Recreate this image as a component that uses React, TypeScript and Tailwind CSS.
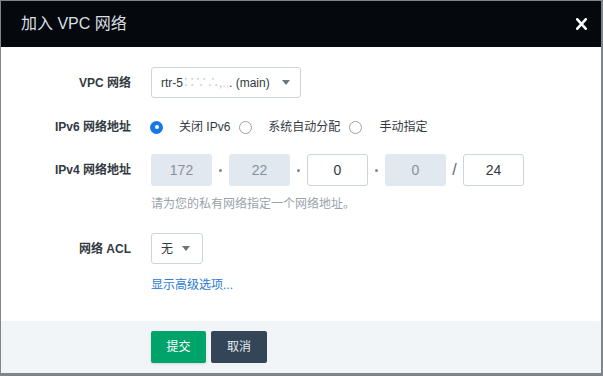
import React from "react";

const Caret = () => (
  <svg width="8" height="5" viewBox="0 0 8 5" className="shrink-0">
    <path d="M0 0 L8 0 L4 5 Z" fill="#6b7580" />
  </svg>
);

const Radio = ({ checked }: { checked?: boolean }) =>
  checked ? (
    <span className="block shrink-0 w-[13px] h-[13px] rounded-full bg-[#1677e6] flex items-center justify-center">
      <span className="block w-[4px] h-[4px] rounded-full bg-white" />
    </span>
  ) : (
    <span className="block shrink-0 w-[13px] h-[13px] rounded-full border border-[#9aa1a8] bg-white" />
  );

const Label = ({ children }: { children: React.ReactNode }) => (
  <div className="w-[130px] shrink-0 text-right text-[12px] font-semibold text-[#333a42]">{children}</div>
);

const IpBox = ({ v, disabled }: { v: string; disabled?: boolean }) => (
  <div
    className={
      disabled
        ? "w-[61px] h-[32px] rounded-[3px] bg-[#e1e8ef] flex items-center justify-center text-[14px] text-[#87929e]"
        : "w-[61px] h-[32px] rounded-[3px] border border-[#cdd4db] bg-white flex items-center justify-center text-[14px] text-[#333a42]"
    }
  >
    {v}
  </div>
);

const Dot = () => (
  <div className="w-[17px] flex items-center justify-center">
    <span className="block w-[3px] h-[3px] rounded-full bg-[#7d8791]" />
  </div>
);

export default function App() {
  return (
    <div
      className="w-[603px] h-[376px] bg-[#7e858d] pt-px pl-px overflow-hidden"
      style={{ fontFamily: '"Liberation Sans", "Noto Sans CJK SC", sans-serif' }}
    >
      <div className="w-[600px] h-[372px] bg-white flex flex-col">
        <div className="h-[46px] bg-[#05090d] flex items-center justify-between pl-[20px] pr-[14px]">
          <span className="text-[16px] text-[#dcdfe2]">加入 VPC 网络</span>
          <svg width="11" height="12" viewBox="0 0 11 12">
            <path d="M1.3 1.3 L9.7 10.7 M9.7 1.3 L1.3 10.7" stroke="#ffffff" strokeWidth="2.6" strokeLinecap="round" />
          </svg>
        </div>
        <div className="h-[274px] pt-[20px] flex flex-col">
          <div className="flex items-center h-[31px]">
            <Label>VPC 网络</Label>
            <div className="ml-[20px] w-[150px] h-[31px] border border-[#cdd4db] rounded-[3px] flex items-center justify-between pl-[9px] pr-[10px]">
              <span className="text-[12px] text-[#333a42] whitespace-nowrap">
                rtr-5<span className="text-[#c5cad0]">∷∵∴</span><span className="text-[#b9bfc5]">,</span>
                <span className="text-[#d5d9dd]">.,</span>. (main)
              </span>
              <Caret />
            </div>
          </div>
          <div className="flex items-center h-[20px] mt-[19px]">
            <Label>IPv6 网络地址</Label>
            <div className="ml-[19px] flex items-center text-[12px] text-[#333a42]">
              <Radio checked />
              <span className="ml-[16px]">关闭 IPv6</span>
              <span className="ml-[9px]"><Radio /></span>
              <span className="ml-[16px]">系统自动分配</span>
              <span className="ml-[9px]"><Radio /></span>
              <span className="ml-[17px]">手动指定</span>
            </div>
          </div>
          <div className="flex items-center h-[32px] mt-[17px]">
            <Label>IPv4 网络地址</Label>
            <div className="ml-[20px] flex items-center">
              <IpBox v="172" disabled />
              <Dot />
              <IpBox v="22" disabled />
              <Dot />
              <IpBox v="0" />
              <Dot />
              <IpBox v="0" disabled />
              <div className="w-[17px] flex items-center justify-center text-[16px] text-[#5d6873]">/</div>
              <IpBox v="24" />
            </div>
          </div>
          <div className="pl-[150px] mt-[9px] h-[18px] flex items-center text-[12px] text-[#9aa2ab]">
            请为您的私有网络指定一个网络地址。
          </div>
          <div className="flex items-center h-[31px] mt-[20px]">
            <Label>网络 ACL</Label>
            <div className="ml-[20px] w-[52px] h-[31px] border border-[#cdd4db] rounded-[3px] flex items-center justify-between pl-[9px] pr-[12px]">
              <span className="text-[12px] text-[#333a42]">无</span>
              <Caret />
            </div>
          </div>
          <div className="pl-[150px] mt-[12px] h-[18px] flex items-center text-[12px] text-[#2b7ad3]">
            显示高级选项...
          </div>
        </div>
        <div className="flex-1 bg-[#f1f5f8] flex items-start pt-[10px] pl-[150px] gap-[5px]">
          <div className="w-[55px] h-[32px] rounded-[2px] bg-[#00a46b] flex items-center justify-center text-[12px] text-white shadow-sm">
            提交
          </div>
          <div className="w-[56px] h-[32px] rounded-[2px] bg-[#344558] flex items-center justify-center text-[12px] text-[#e8ecef]">
            取消
          </div>
        </div>
      </div>
    </div>
  );
}
